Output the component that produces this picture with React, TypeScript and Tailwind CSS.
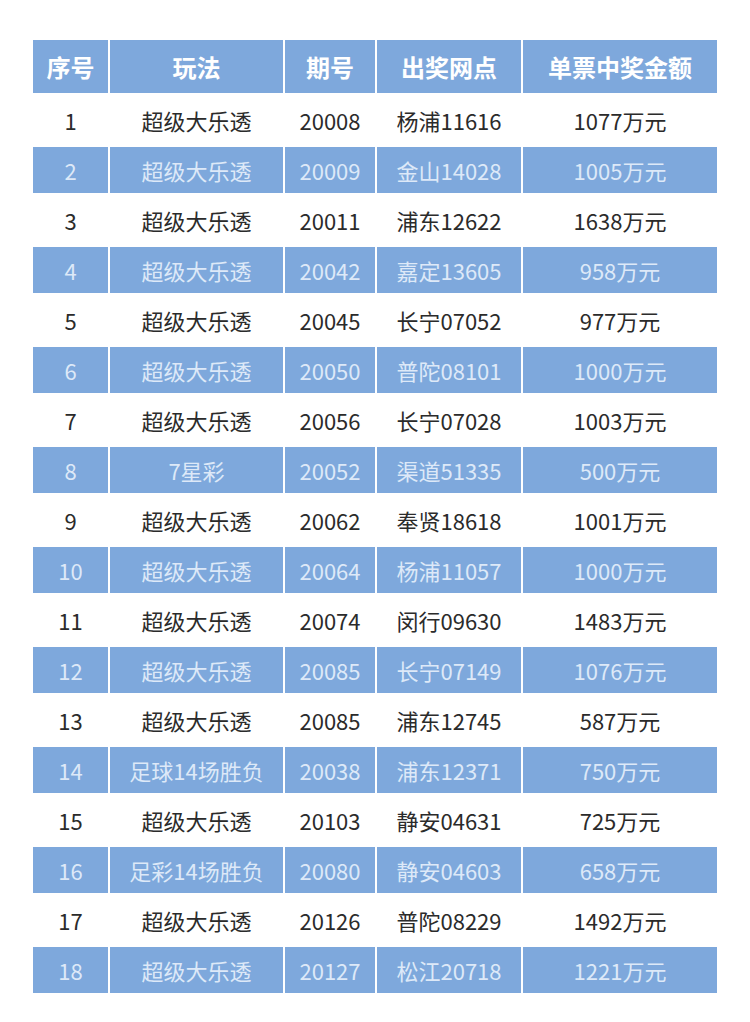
import React from "react";

const rows: [string, string, string, string, string][] = [
  ["1", "超级大乐透", "20008", "杨浦11616", "1077万元"],
  ["2", "超级大乐透", "20009", "金山14028", "1005万元"],
  ["3", "超级大乐透", "20011", "浦东12622", "1638万元"],
  ["4", "超级大乐透", "20042", "嘉定13605", "958万元"],
  ["5", "超级大乐透", "20045", "长宁07052", "977万元"],
  ["6", "超级大乐透", "20050", "普陀08101", "1000万元"],
  ["7", "超级大乐透", "20056", "长宁07028", "1003万元"],
  ["8", "7星彩", "20052", "渠道51335", "500万元"],
  ["9", "超级大乐透", "20062", "奉贤18618", "1001万元"],
  ["10", "超级大乐透", "20064", "杨浦11057", "1000万元"],
  ["11", "超级大乐透", "20074", "闵行09630", "1483万元"],
  ["12", "超级大乐透", "20085", "长宁07149", "1076万元"],
  ["13", "超级大乐透", "20085", "浦东12745", "587万元"],
  ["14", "足球14场胜负", "20038", "浦东12371", "750万元"],
  ["15", "超级大乐透", "20103", "静安04631", "725万元"],
  ["16", "足彩14场胜负", "20080", "静安04603", "658万元"],
  ["17", "超级大乐透", "20126", "普陀08229", "1492万元"],
  ["18", "超级大乐透", "20127", "松江20718", "1221万元"],
];

const headers = ["序号", "玩法", "期号", "出奖网点", "单票中奖金额"];

const font = { fontFamily: '"Noto Sans CJK SC", "Noto Sans", sans-serif' };

export default function App() {
  return (
    <div className="min-h-[1022px] w-[750px] bg-white pt-[40px] pl-[33px]" style={font}>
      <div className="w-[684px]">
        <div className="grid grid-cols-[75px_173px_90px_144px_194px] gap-x-[2px] h-[53px]">
          {headers.map((h) => (
            <div
              key={h}
              className="bg-[#7ea8dc] flex items-center justify-center text-white font-bold text-[24px] leading-none"
            >
              {h}
            </div>
          ))}
        </div>
        {rows.map((r, i) => {
          const blue = i % 2 === 1;
          return (
            <div key={i} className="h-[50px] pt-[4px]">
              <div className="grid grid-cols-[75px_173px_90px_144px_194px] gap-x-[2px] h-[46px]">
                {r.map((c, j) => (
                  <div
                    key={j}
                    className={
                      blue
                        ? "bg-[#7ea8dc] flex items-center justify-center text-[#dde9f8] text-[22px] leading-none"
                        : "bg-white flex items-center justify-center text-[#2b2b2b] text-[22px] leading-none"
                    }
                  >
                    {c}
                  </div>
                ))}
              </div>
            </div>
          );
        })}
      </div>
    </div>
  );
}
